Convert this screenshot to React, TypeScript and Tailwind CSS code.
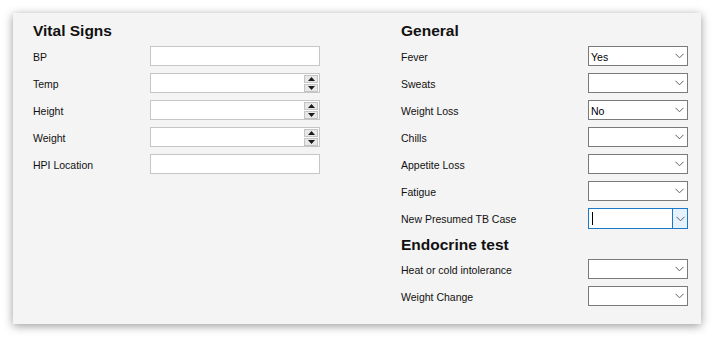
import React from 'react';

const font = { fontFamily: '"Liberation Sans", Arial, sans-serif' };

function Chevron() {
  return (
    <svg width="9" height="6" viewBox="0 0 9 6" className="block">
      <polyline points="0.5,0.8 4.5,4.8 8.5,0.8" fill="none" stroke="#606060" strokeWidth="1" />
    </svg>
  );
}

function Spinner() {
  return (
    <div className="ml-auto mr-[1px] flex h-[17px] w-[14px] flex-col gap-[1px]">
      <div className="flex h-[8px] items-center justify-center border border-[#c4c4c4] bg-[#e8e8e8]">
        <svg width="7" height="4" viewBox="0 0 7 4"><polygon points="3.5,0 7,4 0,4" fill="#1a1a1a" /></svg>
      </div>
      <div className="flex h-[8px] items-center justify-center border border-[#c4c4c4] bg-[#e8e8e8]">
        <svg width="7" height="4" viewBox="0 0 7 4"><polygon points="0,0 7,0 3.5,4" fill="#1a1a1a" /></svg>
      </div>
    </div>
  );
}

function TextRow({ label, spin }: { label: string; spin?: boolean }) {
  return (
    <div className="flex h-[20px] items-start">
      <div className="w-[117px] pt-px text-[10.5px] leading-[20px] text-[#111]">{label}</div>
      <div className="flex h-[20px] w-[170px] items-center border border-[#c6c6c6] bg-white">
        {spin && <Spinner />}
      </div>
    </div>
  );
}

function ComboRow({ label, value, focused }: { label: string; value?: string; focused?: boolean }) {
  return (
    <div className="flex h-[20px] items-start">
      <div className="w-[187px] pt-px text-[10.5px] leading-[20px] text-[#111]">{label}</div>
      {focused ? (
        <div className="flex h-[21px] w-[100px] border border-[#1b78c9] bg-white">
          <div className="flex flex-1 items-center pl-[3px]">
            <div className="h-[13px] w-px bg-black" />
          </div>
          <div className="flex w-[15px] items-center justify-center border-l border-[#1b78c9] bg-[#e5f1fb]">
            <Chevron />
          </div>
        </div>
      ) : (
        <div className="flex h-[20px] w-[100px] items-center border border-[#7a7a7a] bg-white">
          <div className="flex-1 pl-[2px] pt-px text-[10.5px] leading-[18px] text-black">{value}</div>
          <div className="flex w-[15px] items-center justify-center">
            <Chevron />
          </div>
        </div>
      )}
    </div>
  );
}

function Heading({ children, className = '' }: { children: React.ReactNode; className?: string }) {
  return <div className={`text-[15.5px] font-bold leading-[18px] text-[#111] ${className}`}>{children}</div>;
}

export default function App() {
  return (
    <div className="h-[339px] w-[715px] overflow-hidden bg-white pl-[13px] pt-[13px]" style={font}>
      <div className="flex h-[311px] w-[688px] gap-[81px] bg-[#f4f4f4] pl-[20px] pt-[9px] shadow-[0_2px_9px_rgba(0,0,0,0.4)]">
        <div className="flex w-[287px] flex-col">
          <Heading className="mb-[6px]">Vital Signs</Heading>
          <div className="flex flex-col gap-[7px]">
            <TextRow label="BP" />
            <TextRow label="Temp" spin />
            <TextRow label="Height" spin />
            <TextRow label="Weight" spin />
            <TextRow label="HPI Location" />
          </div>
        </div>
        <div className="flex w-[287px] flex-col">
          <Heading className="mb-[6px]">General</Heading>
          <div className="flex flex-col gap-[7px]">
            <ComboRow label="Fever" value="Yes" />
            <ComboRow label="Sweats" />
            <ComboRow label="Weight Loss" value="No" />
            <ComboRow label="Chills" />
            <ComboRow label="Appetite Loss" />
            <ComboRow label="Fatigue" />
            <ComboRow label="New Presumed TB Case" focused />
          </div>
          <Heading className="mb-[5px] mt-[8px]">Endocrine test</Heading>
          <div className="flex flex-col gap-[7px]">
            <ComboRow label="Heat or cold intolerance" />
            <ComboRow label="Weight Change" />
          </div>
        </div>
      </div>
    </div>
  );
}
